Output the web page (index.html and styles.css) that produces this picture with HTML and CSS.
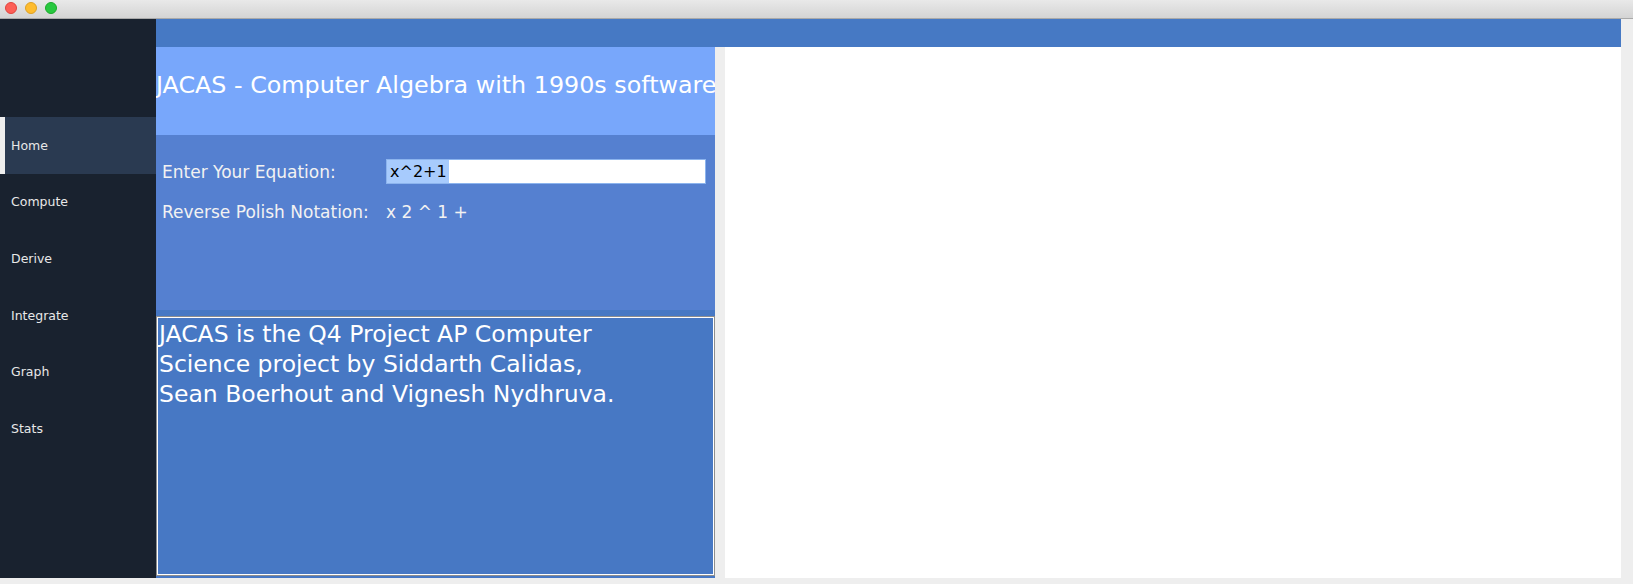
FILE: index.html
```html
<!DOCTYPE html>
<html lang="en">
<head>
<meta charset="utf-8">
<title>JACAS</title>
<link rel="stylesheet" href="styles.css">
</head>
<body>
<div class="window">
  <div class="titlebar">
    <span class="light light-red"></span>
    <span class="light light-yellow"></span>
    <span class="light light-green"></span>
  </div>
  <div class="frame">
    <div class="main">
      <nav class="sidebar">
        <div class="nav-item active">Home</div>
        <div class="nav-item">Compute</div>
        <div class="nav-item">Derive</div>
        <div class="nav-item">Integrate</div>
        <div class="nav-item">Graph</div>
        <div class="nav-item">Stats</div>
      </nav>
      <div class="content">
        <div class="topbar"></div>
        <div class="panes">
          <section class="left">
            <header class="heading">JACAS - Computer Algebra with 1990s software</header>
            <div class="form">
              <div class="label">Enter Your Equation:</div>
              <div class="field"><span class="selection">x^2+1</span></div>
              <div class="label">Reverse Polish Notation:</div>
              <div class="value">x 2 ^ 1 +</div>
            </div>
            <div class="about-wrap">
              <div class="about">JACAS is the Q4 Project AP Computer<br>Science project by Siddarth Calidas,<br>Sean Boerhout and Vignesh Nydhruva.</div>
            </div>
          </section>
          <div class="divider"></div>
          <div class="canvas"></div>
        </div>
      </div>
      <div class="gutter"></div>
    </div>
    <div class="bottom-strip"></div>
  </div>
</div>
</body>
</html>
```
FILE: styles.css
```css
html, body {
  margin: 0;
  padding: 0;
  background: #eeeeee;
}

.window {
  width: 1633px;
  height: 584px;
  display: flex;
  flex-direction: column;
  overflow: hidden;
  font-family: "DejaVu Sans", "Liberation Sans", sans-serif;
}

.titlebar {
  flex: none;
  height: 16px;
  padding: 2px 0 0 5px;
  box-sizing: content-box;
  border-bottom: 1px solid #a9a9a9;
  background: linear-gradient(#e9e9e9, #d4d4d4);
  display: flex;
  align-items: flex-start;
  gap: 8px;
}

.light {
  width: 12px;
  height: 12px;
  border-radius: 50%;
  box-sizing: border-box;
}

.light-red { background: #fd5f57; border: 1px solid #e0443e; }
.light-yellow { background: #febc2e; border: 1px solid #dea123; }
.light-green { background: #28c840; border: 1px solid #1aab29; }

.frame {
  flex: 1;
  display: flex;
  flex-direction: column;
}

.main {
  height: 559px;
  flex: none;
  display: flex;
}

.sidebar {
  width: 156px;
  flex: 0 0 156px;
  background: #19222f;
  padding-top: 98px;
  box-sizing: border-box;
}

.nav-item {
  height: 56.6px;
  display: flex;
  align-items: center;
  font-size: 12.5px;
  color: #e8e8e8;
  box-sizing: border-box;
  border-left: 5px solid transparent;
  padding-left: 6px;
}

.nav-item.active {
  background: #2a3a51;
  border-left-color: #eeeeee;
}

.content {
  width: 1465px;
  flex: 0 0 1465px;
  display: flex;
  flex-direction: column;
}

.topbar {
  height: 28px;
  flex: none;
  background: #4679c4;
}

.panes {
  flex: 1;
  display: flex;
}

.left {
  width: 559px;
  flex: 0 0 559px;
  display: flex;
  flex-direction: column;
}

.heading {
  height: 88px;
  flex: none;
  background: #78a7fb;
  color: #ffffff;
  font-size: 23.8px;
  line-height: 28px;
  padding-top: 24px;
  box-sizing: border-box;
  white-space: nowrap;
  overflow: hidden;
}

.form {
  height: 175px;
  flex: none;
  background: #5580d0;
  display: grid;
  grid-template-columns: 224px 320px;
  grid-auto-rows: 25px;
  row-gap: 15px;
  align-items: center;
  align-content: start;
  padding: 24px 9px 0 6px;
  box-sizing: border-box;
  color: #f2f2f2;
  font-size: 17px;
}

.field {
  height: 25px;
  background: #ffffff;
  border: 1px solid #8cb4ee;
  box-sizing: border-box;
  display: flex;
  align-items: stretch;
}

.selection {
  background: #a7cbfd;
  color: #000000;
  font-size: 16px;
  line-height: 23px;
  padding: 0 2px 0 3px;
}

.about-wrap {
  flex: 1;
  background: #4778c4;
  padding: 6px 0 2px 0;
  box-sizing: border-box;
  display: flex;
}

.about {
  flex: 1;
  border: 1px solid #8e8e8e;
  box-shadow: inset 0 0 0 1px #ffffff;
  padding: 2px 2px 0;
  color: #ffffff;
  font-size: 23.5px;
  line-height: 30px;
  white-space: nowrap;
}

.divider {
  width: 10px;
  flex: 0 0 10px;
  background: #eeeeee;
}

.canvas {
  flex: 1;
  background: #ffffff;
}

.gutter {
  flex: 1;
  background: #eeeeee;
}

.bottom-strip {
  height: 6px;
  flex: none;
  background: #eeeeee;
}
```
